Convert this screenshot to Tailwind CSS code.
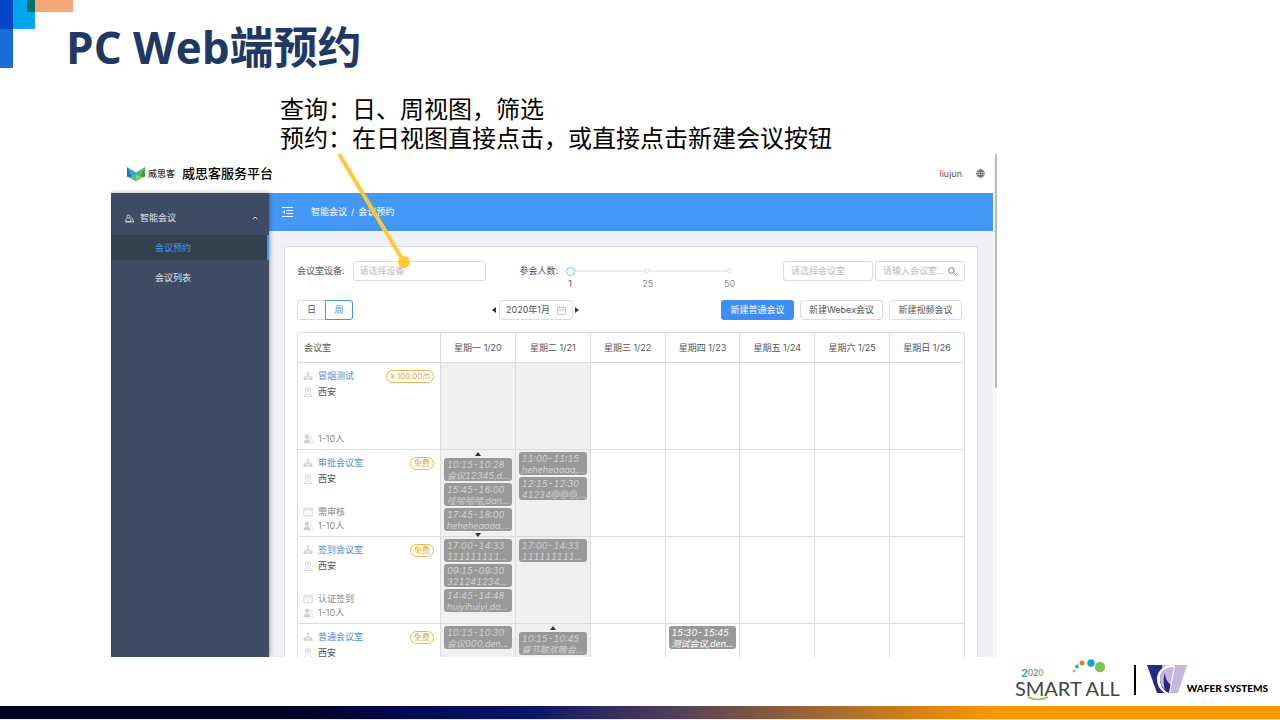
<!DOCTYPE html>
<html lang="zh-CN">
<head>
<meta charset="utf-8">
<meta name="viewport" content="width=device-width, initial-scale=1">
<title>PC Web端预约</title>
<script src="https://cdn.jsdelivr.net/npm/@tailwindcss/browser@4"></script>
</head>
<body class="relative flex h-screen flex-col overflow-hidden bg-white font-['Inter','Noto_Sans_CJK_SC',sans-serif] text-[9px] text-[#555]">

<svg width="0" height="0" class="absolute" aria-hidden="true">
  <symbol id="i-room" viewBox="0 0 10 10"><g fill="#d4d4d4"><circle cx="5" cy="2" r="1.3"/><path d="M3.6 3.8h2.8l.5 2.4H3.1z"/><path d="M.5 6.8C.5 5.5 1.5 5 2.6 5l.4 1.8h4L7.4 5c1.100 0 2.100.5 2.100 1.800V9h-9z"/></g><path d="M5 7v2" stroke="#fff" stroke-width=".8"/></symbol>
  <symbol id="i-pin" viewBox="0 0 10 10"><g fill="none" stroke="#d0d0d0" stroke-width=".9"><path d="M5 7.600C3 5.700 2.200 4.600 2.200 3.300a2.800 2.800 0 0 1 5.600 0C7.800 4.600 7 5.700 5 7.600z"/><circle cx="5" cy="3.300" r="1"/><path d="M2.800 7.200 1.200 9.400h7.600L7.200 7.200"/></g></symbol>
  <symbol id="i-people" viewBox="0 0 10 10"><g fill="#d0d0d0"><circle cx="4" cy="2.800" r="2.200"/><path d="M.5 9.200c0-2.200 1.100-3.400 2.300-3.700h2.400c1.200.3 2.300 1.500 2.300 3.700z"/></g><path d="M7 1.200c1.700.5 1.700 3 .3 3.700 1.400.6 2.100 1.900 2.200 4.200H8.300" fill="none" stroke="#ddd" stroke-width=".9"/></symbol>
  <symbol id="i-check" viewBox="0 0 10 10"><g fill="none" stroke="#d0d0d0" stroke-width=".9"><path d="M.8 1.200h8.400v7.600H.8zM.8 3h8.400M3 5.500l1.600 1.600 2.600-2.500"/></g></symbol>
</svg>

<svg class="absolute left-0 top-0" width="74" height="70" aria-hidden="true">
  <path fill="#00a6ea" d="M0 0h35v29H0z"/><path fill="#186bdb" d="M0 29h13v39H0z"/><path fill="#0046c7" d="M0 0h13v29H0z"/><path fill="#f4a677" d="M35 0h38v12H35z"/><path fill="#00706b" d="M27 0h8v12h-8z"/>
</svg>

<header class="pl-[66px] pt-[17px]">
  <h1 class="h-[60px] font-['Open_Sans','Noto_Sans_CJK_SC',sans-serif] text-[44px] font-bold leading-[60px] text-[#1f3864]">PC Web端预约</h1>
</header>
<div class="mt-4 h-[61px] pl-[280px] font-['Noto_Sans_CJK_SC',sans-serif] text-[24px] leading-[29px] text-black">
  <p>查询：日、周视图，筛选</p>
  <p>预约：在日视图直接点击，或直接点击新建会议按钮</p>
</div>

<section class="ml-[111px] mr-[283px] flex min-h-0 flex-1 overflow-hidden">
  <div class="flex min-w-0 flex-1 flex-col">
    <div class="flex h-[39px] shrink-0 items-center pl-4 pr-2">
      <svg width="18" height="16" viewBox="0 0 18 16" class="mr-[3px] shrink-0" aria-hidden="true"><path fill="#2fa9dc" d="M0 1l9 5.500V12L0 11z"/><path fill="#2b6ca8" d="M0 1l5 10.500-5-1z"/><path fill="#5fb85a" d="M18 1L9 6.500V12l9-1z"/><path fill="#2f9a6a" d="M18 1l-5 10.500 5-1z"/><path fill="#4fb8b0" d="M2 11.500l7-3v7z"/><path fill="#93cf4f" d="M16 11.500l-7-3v7z"/></svg>
      <span class="mr-[7px] font-medium text-[#333]">威思客</span>
      <span class="text-[13px] font-medium text-black">威思客服务平台</span>
      <span class="ml-auto mr-[14px] text-[#555]">liujun</span>
      <svg width="9" height="9" viewBox="0 0 10 10" fill="none" stroke="#555" stroke-width=".8" aria-hidden="true"><circle cx="5" cy="5" r="4.300"/><ellipse cx="5" cy="5" rx="2" ry="4.300"/><path d="M.7 5h8.600M5 .7v8.600M1.300 2.800h7.400M1.300 7.200h7.400"/></svg>
    </div>
    <div class="flex min-h-0 flex-1">
      <nav class="relative z-10 w-[158px] shrink-0 bg-[#3d4c63] pt-2 text-[#e0e4ea] shadow-[1px_0_4px_rgba(0,0,0,0.35)]">
        <button class="flex h-[34px] w-full items-center pl-[14px] pr-[11px]">
          <svg width="9" height="9" viewBox="0 0 10 10" fill="none" stroke="#e0e4ea" stroke-width=".9" class="mr-[6px]" aria-hidden="true"><circle cx="4" cy="2.800" r="1.700"/><path d="M2.800 4.200 1 6v2.500h5.500V6L5 4.200M0 8.800h10M7 4c1.400 0 1.600 1 1.500 2l1 2.500"/></svg>
          智能会议
          <svg width="6" height="4" viewBox="0 0 6 4" fill="none" stroke="#dfe3e9" class="ml-auto" aria-hidden="true"><path d="M.7 3.200 3 1l2.300 2.200"/></svg>
        </button>
        <a href="#" class="flex h-[25px] items-center border-r-2 border-[#4498f7] bg-[#33414f] pl-11 text-[#4498f7]">会议预约</a>
        <a href="#" class="mt-[5px] flex h-[25px] items-center pl-11">会议列表</a>
      </nav>
      <main class="flex min-w-0 flex-1 flex-col bg-[#eff0f5]">
        <div class="flex h-[38px] shrink-0 items-center bg-[#4498f7] pl-[13px] text-white">
          <svg width="11" height="10" viewBox="0 0 11 10" fill="none" stroke="#fff" class="mr-[18px]" aria-hidden="true"><path d="M0 .5h11M4.500 3.500H11M4.500 6.500H11M0 9.500h11"/><path d="M3 3v4L.5 5z" fill="#fff" stroke="none"/></svg>
          <a href="#">智能会议</a><span class="mx-1">/</span><a href="#">会议预约</a>
        </div>
        <div class="mx-[15px] mt-[15px] min-h-0 flex-1 overflow-hidden rounded-t-[3px] border border-b-0 border-[#dcdcdf] bg-white px-3 pt-[14px]">
          <div class="flex h-5 items-center">
            <label for="device" class="mr-2 whitespace-nowrap">会议室设备:</label>
            <select id="device" class="h-5 w-[133px] appearance-none rounded-[3px] border border-[#dcdcdc] bg-white px-[6px] text-[#bbb]"><option>请选择设备</option></select>
            <label for="count" class="ml-[34px] mr-2 whitespace-nowrap">参会人数:</label>
            <div class="relative h-5 w-[168px]">
              <span class="absolute left-[5px] right-[5px] top-[9px] h-[2px] bg-[#ededed]"></span>
              <span class="absolute left-[79px] top-[7px] size-[5px] rounded-full border border-[#dedede] bg-white"></span>
              <span class="absolute right-[2px] top-[7px] size-[5px] rounded-full border border-[#dedede] bg-white"></span>
              <input id="count" type="range" min="1" max="50" value="1" class="absolute left-0 top-0 m-0 h-5 w-full appearance-none bg-transparent [&::-webkit-slider-thumb]:size-[9px] [&::-webkit-slider-thumb]:appearance-none [&::-webkit-slider-thumb]:rounded-full [&::-webkit-slider-thumb]:border [&::-webkit-slider-thumb]:border-solid [&::-webkit-slider-thumb]:border-[#74c0fb] [&::-webkit-slider-thumb]:bg-white">
              <span class="absolute left-[2px] top-4">1</span>
              <span class="absolute left-[76px] top-4 text-[#888]">25</span>
              <span class="absolute right-[-1px] top-4 text-[#888]">50</span>
            </div>
            <select aria-label="请选择会议室" class="ml-auto h-5 w-[90px] appearance-none rounded-[3px] border border-[#dcdcdc] bg-white px-[7px] text-[#bbb]"><option>请选择会议室</option></select>
            <div class="ml-[2px] flex h-5 w-[90px] items-center rounded-[3px] border border-[#dcdcdc] px-[7px]">
              <input type="text" aria-label="请输入会议室" placeholder="请输入会议室..." class="w-[62px] min-w-0 flex-1 placeholder:text-[#bbb] outline-none">
              <svg width="9" height="9" viewBox="0 0 9 9" fill="none" stroke="#777" aria-hidden="true"><circle cx="3.500" cy="3.500" r="2.800"/><path d="m5.600 5.600 2.900 2.900"/></svg>
            </div>
          </div>
          <div class="mt-[19px] flex h-5 items-center">
            <button class="h-5 w-7 rounded-l-[3px] border border-r-0 border-[#dcdcdc]">日</button>
            <button class="h-5 w-7 rounded-r-[3px] border border-[#4a90e2] text-[#4a90e2]">周</button>
            <button aria-label="上个月" class="ml-[139px] mr-[3px]"><svg width="4" height="6" viewBox="0 0 4 6"><path fill="#333" d="M4 0v6L0 3z"/></svg></button>
            <button class="flex h-5 w-[74px] items-center justify-between rounded-[3px] border border-[#dcdcdc] px-[6px]">2020年1月
              <svg width="9" height="9" viewBox="0 0 9 9" fill="none" stroke="#bbb" stroke-width=".8" aria-hidden="true"><path d="M.5 1.500h8v7h-8zM.5 4h8M2.500 0v2.500M6.500 0v2.500"/></svg></button>
            <button aria-label="下个月" class="ml-[2px]"><svg width="4" height="6" viewBox="0 0 4 6"><path fill="#333" d="M0 0v6l4-3z"/></svg></button>
            <div class="ml-auto flex gap-[6px] whitespace-nowrap pr-[3px]">
              <button class="h-5 w-[73px] rounded-[3px] bg-[#3f8ef7] text-white">新建普通会议</button>
              <button class="h-5 w-[83px] rounded-[3px] border border-[#dcdcdc]">新建Webex会议</button>
              <button class="h-5 w-[73px] rounded-[3px] border border-[#dcdcdc]">新建视频会议</button>
            </div>
          </div>
          <div class="mt-3 overflow-hidden rounded-t-[3px] border border-b-0 border-[#dcdcdc]">
            <table class="w-full table-fixed border-separate border-spacing-0 [&_td]:border-t [&_td]:border-l [&_td]:border-[#dcdcdc] [&_td]:p-0 [&_td]:align-top [&_td:first-child]:border-l-0 [&_th]:font-normal">
              <thead>
                <tr class="h-[29px] [&>th+th]:border-l [&>th+th]:border-[#dcdcdc]">
                  <th scope="col" class="w-[142px] pl-[6px] text-left">会议室</th><th scope="col">星期一 1/20</th><th scope="col">星期二 1/21</th><th scope="col">星期三 1/22</th><th scope="col">星期四 1/23</th><th scope="col">星期五 1/24</th><th scope="col">星期六 1/25</th><th scope="col">星期日 1/26</th>
                </tr>
              </thead>
              <tbody id="rooms"></tbody>
            </table>
          </div>
        </div>
      </main>
    </div>
  </div>
  <div class="w-1 shrink-0 bg-[#f7f7f7] pl-[2px]"><div class="h-[234px] w-[2px] rounded-full bg-[#b9b9b9]"></div></div>
</section>

<footer class="shrink-0">
  <div class="flex h-[49px] items-start justify-end pr-3">
    <div class="relative flex h-[46px] flex-col pt-[11px] font-['Lato',sans-serif]">
      <svg class="absolute left-0 top-0" width="108" height="46" viewBox="0 0 108 46" aria-hidden="true"><circle cx="59" cy="14" r="1.400" fill="#f5a040"/><circle cx="62" cy="9.500" r="2" fill="#2aa7dc"/><circle cx="67" cy="6" r="2.500" fill="#ec7a35"/><circle cx="76" cy="6" r="3.800" fill="#1ba0dc"/><circle cx="85" cy="10" r="5.200" fill="#7cc455"/><path d="M13 40q10 5 20 0" fill="none" stroke="#8cc63f" stroke-width="1.500"/></svg>
      <span class="flex h-[10px] items-end pl-[6px] text-[9px] font-bold leading-[10px]"><span class="text-[12px] text-[#2aa0d8]">2</span><span class="text-[#ec7a35]">0</span><span class="text-[#2aa0d8]">2</span><span class="text-[#7cc455]">0</span></span>
      <span class="whitespace-nowrap text-[20px] leading-5 text-[#444]">SMART ALL</span>
    </div>
    <span class="ml-[14px] mt-2 h-[30px] w-[2px] bg-black"></span>
    <svg class="ml-[11px] mt-2" width="40" height="28" viewBox="0 0 40 28" aria-hidden="true"><path fill="#262a86" d="M0 0h15l6 28H10z"/><path fill="#c6b7dc" d="M15 0h25l-9 28H20z"/><path fill="#fff" d="M28 0C17-1 10 6 10 14c0 6 3 11 8 14h3C15 24 13 19 13 14 13 7 18 2 27 2z"/><path fill="#c6b7dc" d="M27 2C18 2 13 7 13 14c0 4 2 8 5 11-2-8-1-17 5-21l4-1z"/><path fill="#262a86" d="M18 8c-2 5-2 12 1 18l3 2 2-8c-4-3-6-7-6-12z"/><path fill="#fff" d="M28 1l-5 27h-1l5-27z"/></svg>
    <span class="whitespace-nowrap pt-6 font-['Lato',sans-serif] text-[10px] font-black leading-[14px] text-black">WAFER SYSTEMS</span>
  </div>
  <div class="h-[13px] bg-[linear-gradient(90deg,#000020_0%,#000022_22%,#000a58_33%,#08146a_41%,#5a4455_54%,#9a6238_63%,#ff9800_78%)]"></div>
  <div class="h-px bg-[#eee]"></div>
</footer>

<svg class="pointer-events-none absolute left-[330px] top-[150px]" width="90" height="125" aria-hidden="true"><path d="M9 4l65 108" stroke="#ffc935" stroke-width="4"/><circle cx="74" cy="112" r="6" fill="#ffc935"/></svg>

<script>
const rooms = [
  { name: '冒烟测试', price: '¥ 100.00/h', size: '1-10人', days: {} },
  { name: '审批会议室', price: '免费', rule: '需审核', size: '1-10人', days: {
    0: { up: true, down: true, list: [['10:15-10:28', '会议12345,d...'], ['15:45-16:00', '哇哈哈哈,dan...'], ['17:45-18:00', 'heheheaaaa,...']] },
    1: { list: [['11:00-11:15', 'heheheaaaa,...'], ['12:15-12:30', '41234@@@,...']] } } },
  { name: '签到会议室', price: '免费', rule: '认证签到', size: '1-10人', days: {
    0: { list: [['17:00-14:33', '111111111...'], ['09:15-09:30', '321241234...'], ['14:45-14:48', 'huiyihuiyi,da...']] },
    1: { list: [['17:00-14:33', '111111111...']] } } },
  { name: '普通会议室', price: '免费', days: {
    0: { list: [['10:15-10:30', '会议000,den...']] },
    1: { up: true, list: [['10:15-10:45', '春节联欢晚会...']] },
    3: { list: [['15:30-15:45', '测试会议,den...']] } } },
];
const icon = id => `<svg width="10" height="10" class="mr-[5px] shrink-0" aria-hidden="true"><use href="#${id}"/></svg>`;
const arrow = d => `<svg width="6" height="4" viewBox="0 0 6 4" class="mx-auto mb-[2px] shrink-0" aria-hidden="true"><path fill="#333" d="${d}"/></svg>`;
const line = (id, text) => text ? `<div class="flex h-[14px] items-center">${icon(id)}${text}</div>` : '';
function cell(day, i) {
  let h = '';
  if (day) {
    if (day.up) h += arrow('M0 4h6L3 0z');
    h += '<div class="flex flex-col gap-[2px]">' + day.list.map(e =>
      `<div class="h-[23px] overflow-hidden whitespace-nowrap rounded-[3px] bg-[#999] pl-[3px] pt-px italic leading-[11px] tabular-nums ${i < 2 ? 'text-[#d2d2d2]' : 'text-white'}"><div>${e[0]}</div><div>${e[1]}</div></div>`).join('') + '</div>';
    if (day.down) h += '<div class="h-[2px] shrink-0"></div>' + arrow('M0 0h6L3 4z');
  }
  return `<td class="${i < 2 ? 'bg-[#f0f0f0]' : 'bg-white'}"><div class="flex h-[86px] flex-col px-[3px] pt-[2px]">${h}</div></td>`;
}
document.getElementById('rooms').innerHTML = rooms.map(r => `<tr><td><div class="flex h-[86px] flex-col pb-[3px] pl-[5px] pr-[6px] pt-[5px]">
  <div class="flex h-4 items-center">${icon('i-room')}<a href="#" class="text-[#4a90e2]">${r.name}</a><span class="ml-auto flex h-[13px] items-center rounded-full border border-[#eab54e] px-[3px] text-[8px] text-[#e5a93a]">${r.price}</span></div>
  <div class="flex h-4 items-center">${icon('i-pin')}西安</div>
  <div class="mt-auto text-[#888]">${line('i-check', r.rule)}${line('i-people', r.size)}</div>
  </div></td>${[0, 1, 2, 3, 4, 5, 6].map(i => cell(r.days[i], i)).join('')}</tr>`).join('');
</script>
</body>
</html>
